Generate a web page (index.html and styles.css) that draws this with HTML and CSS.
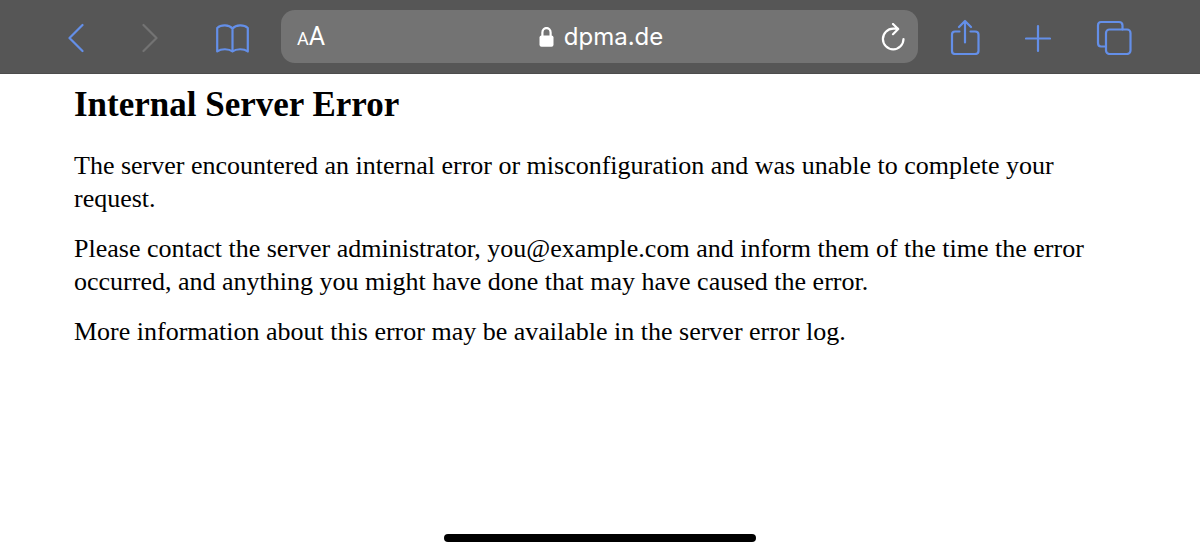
FILE: index.html
```html
<!DOCTYPE html>
<html lang="en">
<head>
<meta charset="utf-8">
<meta name="viewport" content="width=device-width, initial-scale=1">
<title>Internal Server Error</title>
<link rel="stylesheet" href="styles.css">
</head>
<body>
<header class="toolbar">
  <nav class="group group-nav" aria-label="Navigation">
    <button class="tool" type="button" aria-label="Back">
      <svg width="16" height="36" viewBox="0 0 16 36"><path d="M14.500 6L1.500 19L14.500 32"/></svg>
    </button>
    <button class="tool" type="button" aria-label="Forward" disabled>
      <svg width="16" height="36" viewBox="0 0 16 36"><path d="M1.500 6L14.500 19L1.500 32"/></svg>
    </button>
    <button class="tool" type="button" aria-label="Bookmarks">
      <svg width="33" height="36" viewBox="0 0 33 36"><path d="M16.500 9.500C13 5.500 5 5.500 1.200 9V32.500C5 29.500 13 29.500 16.500 32.500C20 29.500 28 29.500 31.800 32.500V9C28 5.500 20 5.500 16.500 9.500V32.500"/></svg>
    </button>
  </nav>
  <form class="address">
    <button class="text-size" type="button" aria-label="Text size"><span class="small-a">A</span><span class="large-a">A</span></button>
    <label class="site">
      <svg class="lock" width="15" height="20" viewBox="0 0 15 20" aria-hidden="true"><path class="shackle" d="M3.400 10V5.600C3.400 -0.500 11.600 -0.500 11.600 5.600V10"/><rect class="lock-body" x="0.500" y="8.500" width="14" height="11.200" rx="2"/></svg>
      <input class="url" type="text" value="dpma.de" aria-label="Address">
    </label>
    <button class="reload" type="button" aria-label="Reload">
      <svg width="24" height="28" viewBox="0 0 24 28"><path d="M22.500 16A10.300 10.300 0 1 1 12.200 5.700H17M12 1L17.200 6L12 11.200"/></svg>
    </button>
  </form>
  <div class="group group-actions">
    <button class="tool" type="button" aria-label="Share">
      <svg width="30" height="36" viewBox="0 0 30 36"><path d="M9.500 12.500H5Q2 12.500 2 15.500V32Q2 35 5 35H25Q28.500 35 28.500 32V15.500Q28.500 12.500 25 12.500H20.500M15 23.500V2M9 8L15 2L21 8"/></svg>
    </button>
    <button class="tool" type="button" aria-label="New tab">
      <svg width="26" height="36" viewBox="0 0 26 36"><path d="M1 19.500H25M13 7V32"/></svg>
    </button>
    <button class="tool" type="button" aria-label="Tabs">
      <svg width="36" height="36" viewBox="0 0 36 36"><path d="M9.500 27.500H5Q2 27.500 2 24V6.500Q2 3 5 3H23Q26.500 3 26.500 6.500V10.500"/><rect x="10" y="10.500" width="24.500" height="24.500" rx="3.500"/></svg>
    </button>
  </div>
</header>
<main class="page">
  <h1 class="title">Internal Server Error</h1>
  <p class="text">The server encountered an internal error or misconfiguration and was unable to complete your request.</p>
  <p class="text">Please contact the server administrator, you@example.com and inform them of the time the error occurred, and anything you might have done that may have caused the error.</p>
  <p class="text">More information about this error may be available in the server error log.</p>
</main>
<div class="home-indicator"></div>
</body>
</html>
```

FILE: styles.css
```css
* {
  box-sizing: border-box;
}

body {
  margin: 0;
  min-height: 100vh;
  display: flex;
  flex-direction: column;
  background: #fff;
  color: #000;
  font-family: "Liberation Serif", "Times New Roman", serif;
}

button,
input {
  margin: 0;
  padding: 0;
  border: 0;
  background: none;
  color: inherit;
  font: inherit;
}

svg {
  display: block;
  fill: none;
  stroke: currentColor;
  stroke-width: 2.2;
  stroke-linecap: round;
  stroke-linejoin: round;
}

.toolbar {
  display: flex;
  align-items: center;
  gap: 32px;
  padding: 10px 68px;
  border-bottom: 1px solid #4c4c4c;
  background: #565656;
}

.group {
  display: flex;
  align-items: center;
}

.group-nav {
  gap: 58px;
}

.group-actions {
  gap: 45px;
}

.tool {
  color: #648fe8;
}

.tool:disabled {
  color: #737373;
}

.address {
  flex: 1;
  display: grid;
  grid-template-columns: 1fr auto 1fr;
  align-items: center;
  height: 53px;
  padding: 0 13px 0 16px;
  border-radius: 14px;
  background: #737373;
  color: #fff;
  font-family: Inter, sans-serif;
}

.text-size {
  justify-self: start;
  font-family: Roboto, sans-serif;
}

.small-a {
  font-size: 18px;
}

.large-a {
  font-size: 25px;
}

.site {
  display: flex;
  align-items: center;
  gap: 10px;
}

.lock-body {
  fill: currentColor;
  stroke: none;
}

.url {
  width: auto;
  field-sizing: content;
  font-size: 24px;
  line-height: 32px;
}

.reload {
  justify-self: end;
}

.page {
  flex: 1;
  padding: 11px 74px;
}

.title {
  margin: 0 0 24px;
  font-size: 35px;
  line-height: 40px;
}

.text {
  margin: 0 0 17px;
  font-size: 26px;
  line-height: 33px;
}

.home-indicator {
  align-self: center;
  width: 26%;
  height: 8px;
  margin-bottom: 12px;
  border-radius: 4px;
  background: #000;
}
```
